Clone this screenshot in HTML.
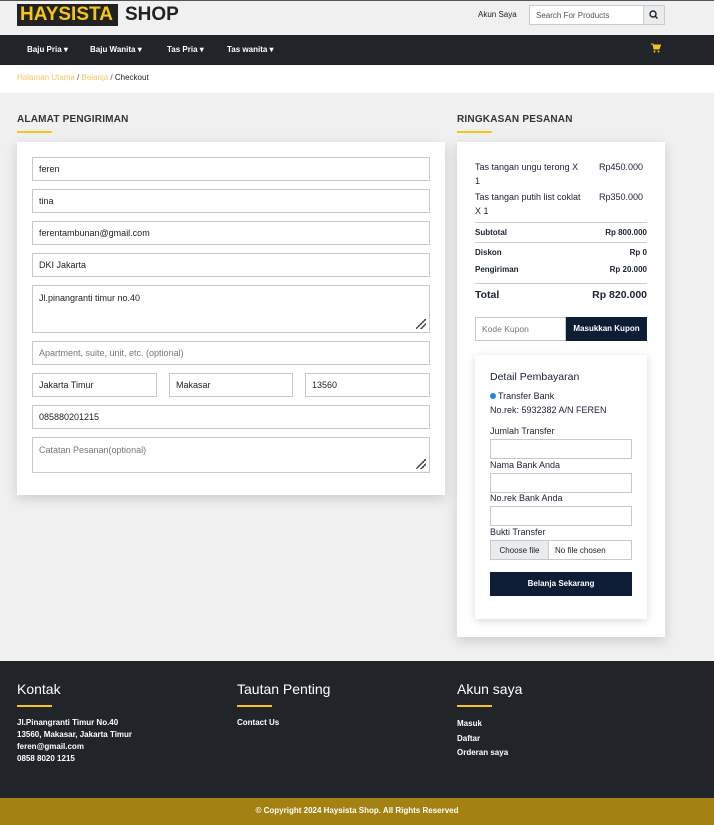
<!DOCTYPE html>
<html><head><meta charset="utf-8"><style>
*{box-sizing:border-box;margin:0;padding:0}
body{width:714px;height:825px;position:relative;background:#f0f0f0;font-family:"Liberation Sans",sans-serif;overflow:hidden;color:#222}
.a{position:absolute}
.in{position:absolute;background:#fff;border:1px solid #c8c8c8;font-size:9px;padding:0 6px;display:flex;align-items:center;color:#222}
.in.p{color:#777}
.ta{align-items:flex-start;padding-top:7px}
.grip{position:absolute;right:3px;bottom:3px;width:10px;height:10px;background:linear-gradient(135deg,transparent 45%,#444 45%,#444 55%,transparent 55%,transparent 70%,#444 70%,#444 80%,transparent 80%)}
.h{font-size:10px;font-weight:bold;color:#333;letter-spacing:.2px}
.ul{height:2px;width:35px;background:#f5c518}
.nav{font-size:8px;font-weight:bold;color:#fff}
.r{font-size:9px;color:#1a2233}
.rb{font-size:8px;font-weight:bold;color:#1a2233}
.fh{font-size:14px;color:#fff}
.ft{font-size:8px;font-weight:bold;color:#fff;line-height:12px}
</style></head><body>
<div class="a" style="left:0;top:0;width:714px;height:1px;background:#555"></div>
<div class="a" style="left:17px;top:4px;width:101px;height:22px;background:#222;color:#f5c518;font-size:19px;font-weight:bold;padding-left:3px;line-height:22px">HAYSISTA</div>
<div class="a" style="left:125px;top:4px;font-size:19px;font-weight:bold;line-height:22px;color:#222">SHOP</div>
<div class="a" style="left:478px;top:10px;font-size:8px;color:#222">Akun Saya</div>
<div class="a" style="left:529px;top:5px;width:115px;height:20px;background:#fff;border:1px solid #ccc;font-size:8px;color:#555;padding:5px 6px">Search For Products</div>
<div class="a" style="left:643px;top:5px;width:22px;height:20px;background:#e9ecef;border:1px solid #ccc"><svg width="20" height="18" viewBox="0 0 20 18"><circle cx="9" cy="8" r="3" fill="none" stroke="#222" stroke-width="1.4"/><path d="M11 10l2.5 2.5" stroke="#222" stroke-width="1.5"/></svg></div>
<div class="a" style="left:0;top:35px;width:714px;height:30px;background:#212428"></div>
<div class="a nav" style="left:27px;top:45px">Baju Pria ▾</div>
<div class="a nav" style="left:90px;top:45px">Baju Wanita ▾</div>
<div class="a nav" style="left:167px;top:45px">Tas Pria ▾</div>
<div class="a nav" style="left:227px;top:45px">Tas wanita ▾</div>
<svg class="a" style="left:651px;top:43px" width="10" height="10" viewBox="0 0 10 10"><path d="M0 1h2l1 5h5l1.5-4H2.5" fill="#f5c518" stroke="#f5c518" stroke-width="1"/><circle cx="3.5" cy="8.5" r="1" fill="#f5c518"/><circle cx="7.5" cy="8.5" r="1" fill="#f5c518"/></svg>
<div class="a" style="left:0;top:65px;width:714px;height:28px;background:#fff"></div>
<div class="a" style="left:17px;top:73px;font-size:8px;color:#f5c56a">Halaman Utama <span style="color:#555">/</span> Belanja <span style="color:#555">/</span> <span style="color:#222">Checkout</span></div>

<div class="a h" style="left:17px;top:114px">ALAMAT PENGIRIMAN</div>
<div class="a ul" style="left:17px;top:131px"></div>
<div class="a h" style="left:457px;top:114px">RINGKASAN PESANAN</div>
<div class="a ul" style="left:457px;top:131px"></div>

<div class="a" style="left:17px;top:142px;width:428px;height:353px;background:#fff;box-shadow:0 4px 12px rgba(0,0,0,.15)"></div>
<div class="in" style="left:32px;top:157px;width:398px;height:24px">feren</div>
<div class="in" style="left:32px;top:189px;width:398px;height:24px">tina</div>
<div class="in" style="left:32px;top:221px;width:398px;height:24px">ferentambunan@gmail.com</div>
<div class="in" style="left:32px;top:253px;width:398px;height:24px">DKI Jakarta</div>
<div class="in ta" style="left:32px;top:285px;width:398px;height:48px">Jl.pinangranti timur no.40<div class="grip"></div></div>
<div class="in p" style="left:32px;top:341px;width:398px;height:24px">Apartment, suite, unit, etc. (optional)</div>
<div class="in" style="left:32px;top:373px;width:125px;height:24px">Jakarta Timur</div>
<div class="in" style="left:169px;top:373px;width:124px;height:24px">Makasar</div>
<div class="in" style="left:305px;top:373px;width:125px;height:24px">13560</div>
<div class="in" style="left:32px;top:405px;width:398px;height:24px">085880201215</div>
<div class="in ta p" style="left:32px;top:437px;width:398px;height:36px">Catatan Pesanan(optional)<div class="grip"></div></div>

<div class="a" style="left:457px;top:142px;width:208px;height:495px;background:#fff;box-shadow:0 4px 12px rgba(0,0,0,.15)"></div>
<div class="a r" style="left:475px;top:160px;line-height:14px">Tas tangan ungu terong X<br>1</div>
<div class="a r" style="left:599px;top:160px;line-height:14px">Rp450.000</div>
<div class="a r" style="left:475px;top:190px;line-height:14px">Tas tangan putih list coklat<br>X 1</div>
<div class="a r" style="left:599px;top:190px;line-height:14px">Rp350.000</div>
<div class="a" style="left:475px;top:222px;width:172px;height:1px;background:#ccc"></div>
<div class="a rb" style="left:475px;top:228px">Subtotal</div><div class="a rb" style="right:67px;top:228px">Rp 800.000</div>
<div class="a" style="left:475px;top:242px;width:172px;height:1px;background:#ccc"></div>
<div class="a rb" style="left:475px;top:248px">Diskon</div><div class="a rb" style="right:67px;top:248px">Rp 0</div>
<div class="a rb" style="left:475px;top:265px">Pengiriman</div><div class="a rb" style="right:67px;top:265px">Rp 20.000</div>
<div class="a" style="left:475px;top:283px;width:172px;height:1px;background:#ccc"></div>
<div class="a" style="left:475px;top:289px;font-size:10.5px;font-weight:bold;color:#1a2233">Total</div>
<div class="a" style="right:67px;top:289px;font-size:10.5px;font-weight:bold;color:#1a2233">Rp 820.000</div>
<div class="in p" style="left:475px;top:317px;width:91px;height:24px;font-size:8.5px">Kode Kupon</div>
<div class="a" style="left:566px;top:317px;width:81px;height:24px;background:#0e1d36;color:#fff;font-size:8px;font-weight:bold;text-align:center;line-height:24px">Masukkan Kupon</div>

<div class="a" style="left:475px;top:355px;width:172px;height:264px;background:#fff;box-shadow:0 2px 8px rgba(0,0,0,.15)"></div>
<div class="a" style="left:490px;top:371px;font-size:10.5px;color:#1a2233">Detail Pembayaran</div>
<div class="a" style="left:490px;top:393px;width:6px;height:6px;border-radius:50%;background:#1e88e5"></div>
<div class="a r" style="left:498px;top:391px">Transfer Bank</div>
<div class="a r" style="left:490px;top:405px">No.rek: 5932382 A/N FEREN</div>
<div class="a r" style="left:490px;top:426px">Jumlah Transfer</div>
<div class="in" style="left:490px;top:439px;width:142px;height:20px"></div>
<div class="a r" style="left:490px;top:460px">Nama Bank Anda</div>
<div class="in" style="left:490px;top:473px;width:142px;height:20px"></div>
<div class="a r" style="left:490px;top:493px">No.rek Bank Anda</div>
<div class="in" style="left:490px;top:506px;width:142px;height:20px"></div>
<div class="a r" style="left:490px;top:527px">Bukti Transfer</div>
<div class="in" style="left:490px;top:540px;width:142px;height:20px;padding:0"><span style="background:#e9ecef;height:100%;width:58px;border-right:1px solid #ccc;display:flex;align-items:center;justify-content:center;font-size:8px">Choose file</span><span style="font-size:8px;padding-left:6px">No file chosen</span></div>
<div class="a" style="left:490px;top:572px;width:142px;height:24px;background:#0e1d36;color:#fff;font-size:8px;font-weight:bold;text-align:center;line-height:24px">Belanja Sekarang</div>

<div class="a" style="left:0;top:661px;width:714px;height:138px;background:#212428"></div>
<div class="a fh" style="left:17px;top:681px">Kontak</div>
<div class="a fh" style="left:237px;top:681px">Tautan Penting</div>
<div class="a fh" style="left:457px;top:681px">Akun saya</div>
<div class="a ul" style="left:17px;top:705px"></div>
<div class="a ul" style="left:237px;top:705px"></div>
<div class="a ul" style="left:457px;top:705px"></div>
<div class="a ft" style="left:17px;top:717px">Jl.Pinangranti Timur No.40<br>13560, Makasar, Jakarta Timur<br>feren@gmail.com<br>0858 8020 1215</div>
<div class="a ft" style="left:237px;top:717px">Contact Us</div>
<div class="a ft" style="left:457px;top:717px;line-height:14.5px">Masuk<br>Daftar<br>Orderan saya</div>
<div class="a" style="left:0;top:798px;width:714px;height:27px;background:#a38212;color:#fff;font-size:8px;font-weight:bold;text-align:center;line-height:26px">© Copyright 2024 Haysista Shop. All Rights Reserved</div>
</body></html>
